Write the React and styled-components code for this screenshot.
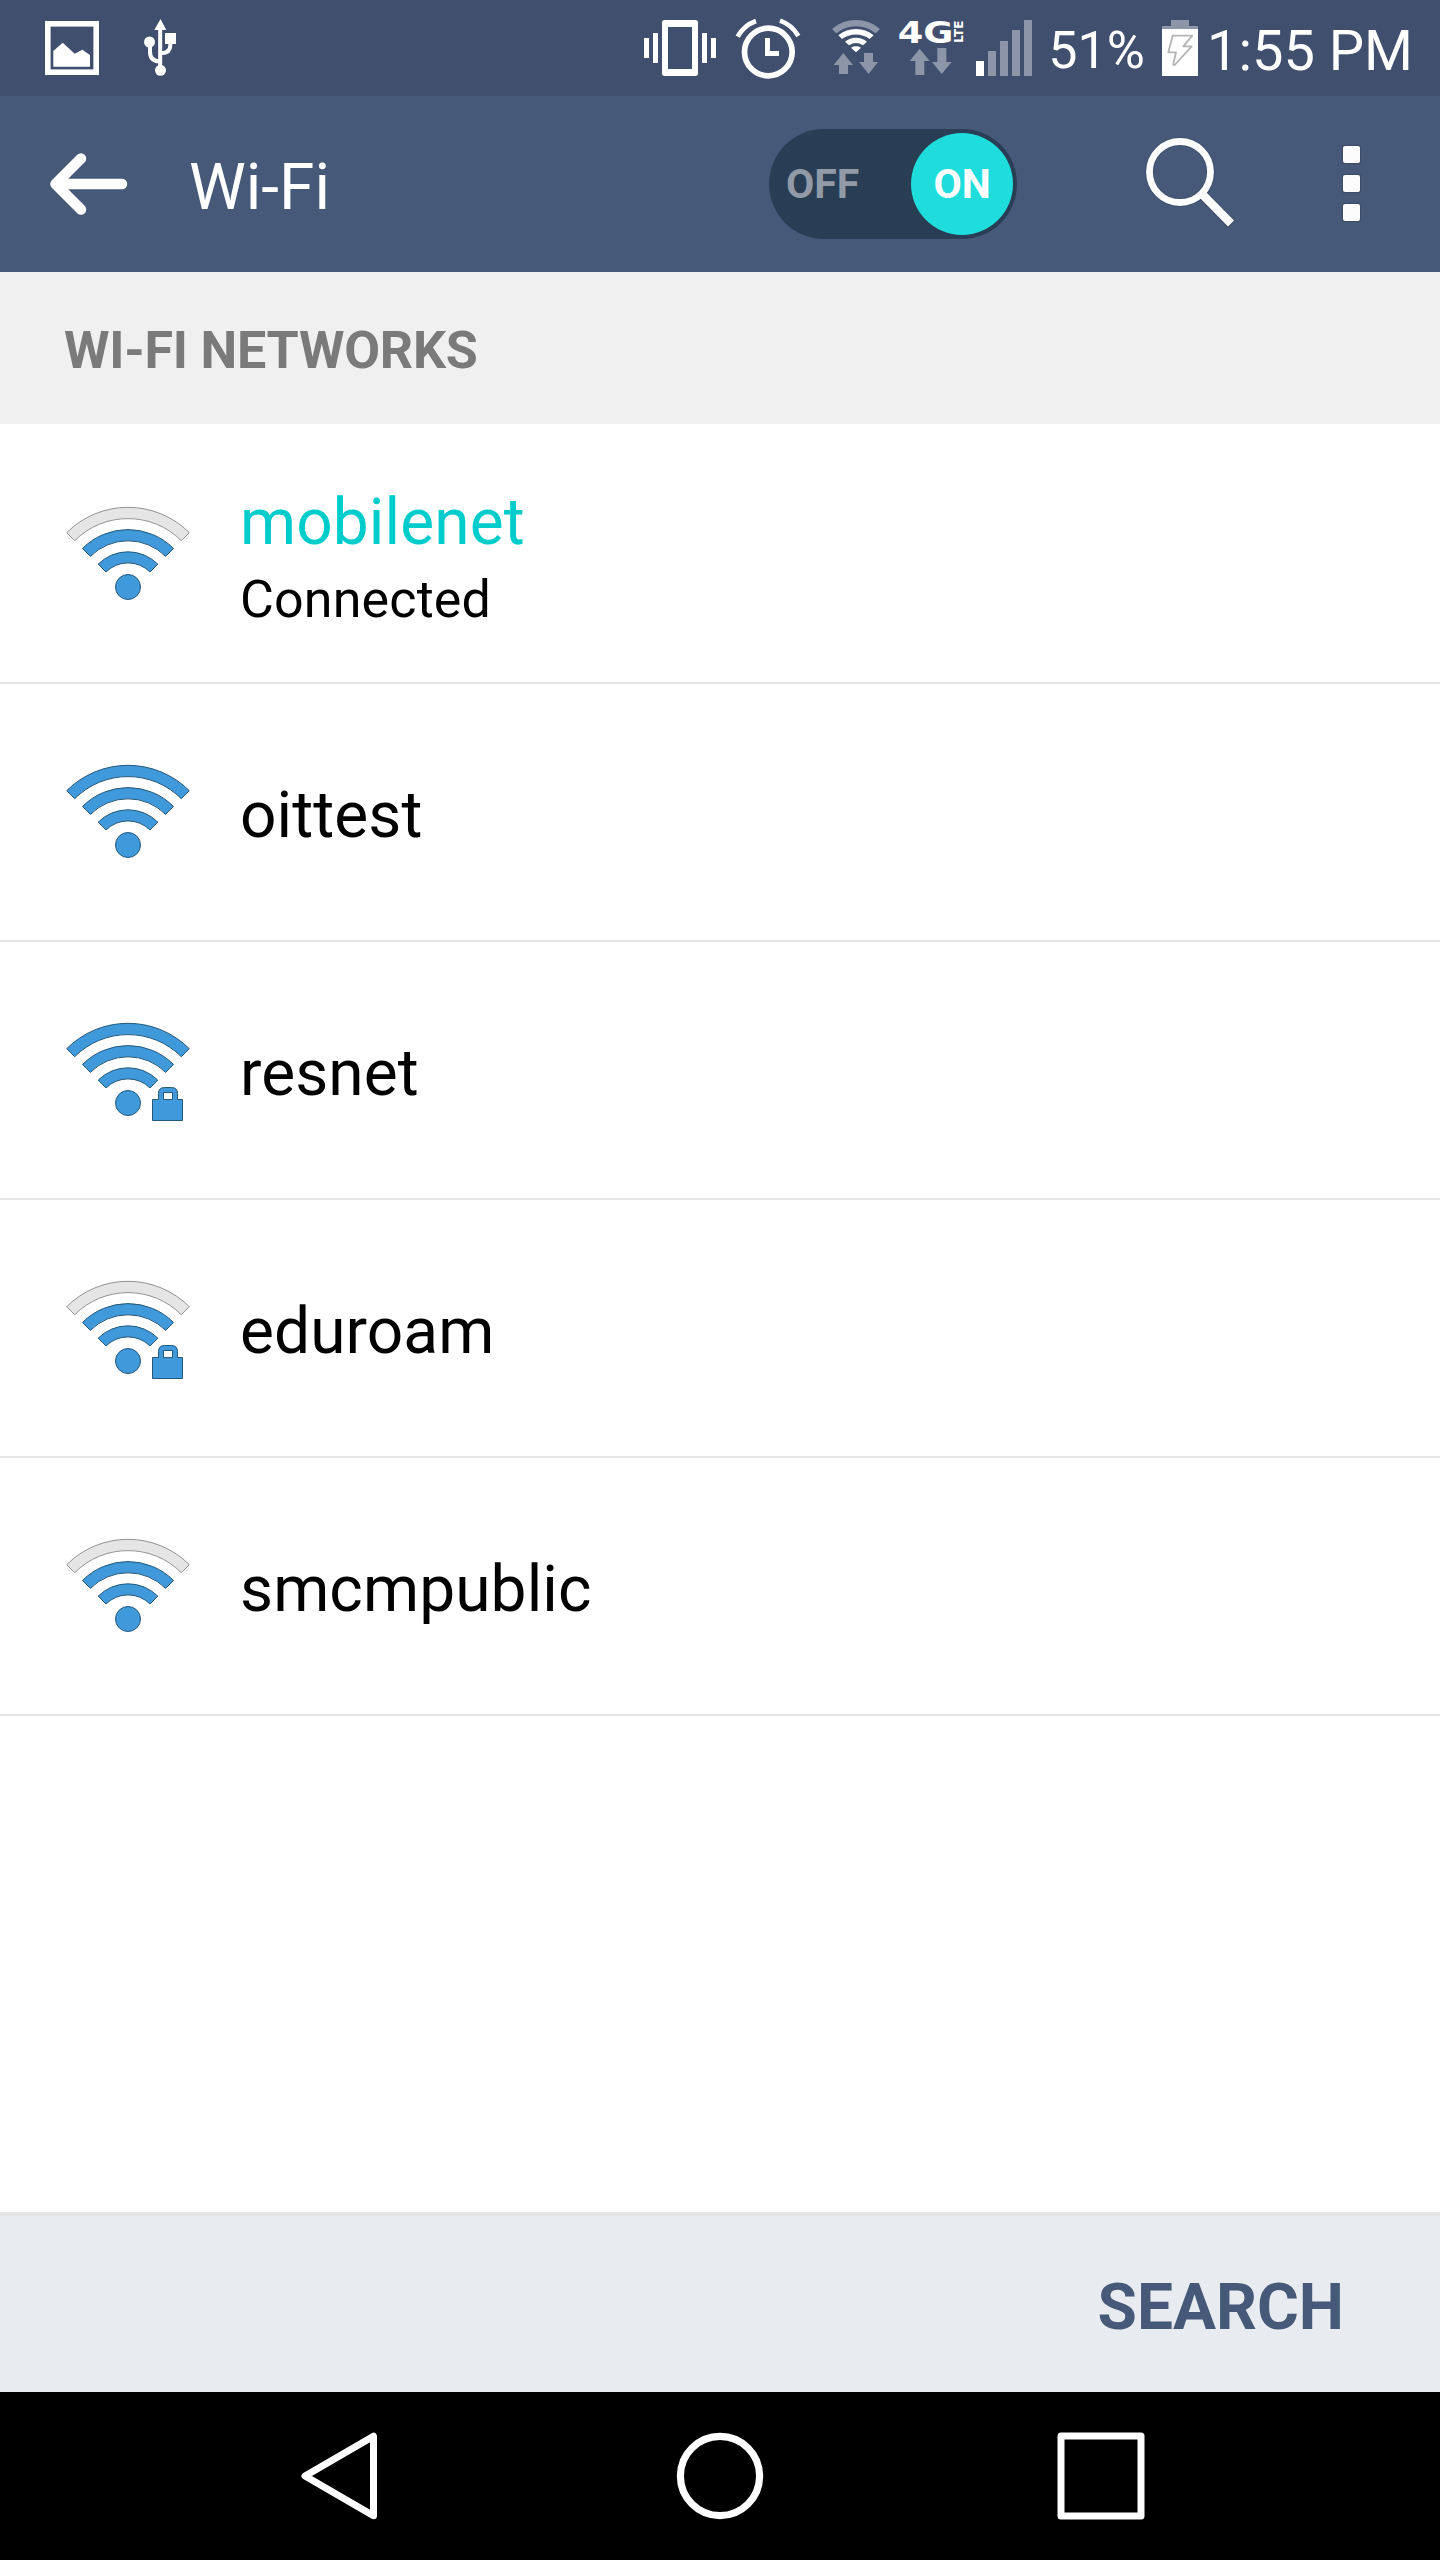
import React from 'react'
import styled, { createGlobalStyle } from 'styled-components'

const GlobalStyle = createGlobalStyle`
  * {
    box-sizing: border-box;
  }
  body {
    margin: 0;
    background: #fff;
    font-family: Roboto, 'Liberation Sans', sans-serif;
  }
  svg {
    display: block;
    flex: none;
    overflow: visible;
  }
`

const Screen = styled.div`
  display: flex;
  flex-direction: column;
  width: 1440px;
  height: 2560px;
  overflow: hidden;
  background: #fff;
`

const StatusBar = styled.div`
  display: flex;
  align-items: center;
  justify-content: space-between;
  flex: none;
  height: 96px;
  padding: 0 27px 0 45px;
  background: #414f6e;
  color: #fff;
`

const StatusGroup = styled.div`
  display: flex;
  align-items: center;
  gap: ${props => props.$gap || 0}px;
  margin-left: ${props => props.$left || 0}px;
`

const StatusText = styled.span`
  padding-top: 5px;
  margin-left: ${props => props.$left}px;
  margin-right: ${props => props.$right || 0}px;
  font-size: ${props => props.$size}px;
  line-height: 66px;
  white-space: nowrap;
`

const AppBar = styled.header`
  display: flex;
  align-items: center;
  flex: none;
  height: 176px;
  padding: 0 80px 0 50px;
  background: #465978;
  color: #fff;
`

const Title = styled.h1`
  flex: 1;
  margin: 0;
  padding: 8px 0 0 60px;
  font-size: 64px;
  font-weight: 400;
  line-height: 76px;
`

const Toggle = styled.div`
  display: flex;
  align-items: center;
  justify-content: space-between;
  width: 248px;
  height: 110px;
  margin-right: 129px;
  padding: 0 4px 0 17px;
  border-radius: 55px;
  background: #293e54;
  font-size: 41px;
  font-weight: 700;
`

const ToggleOff = styled.span`
  color: #929aa7;
`

const ToggleKnob = styled.span`
  display: flex;
  align-items: center;
  justify-content: center;
  width: 102px;
  height: 102px;
  border-radius: 50%;
  background: #1fdddc;
`

const MenuDots = styled.div`
  display: grid;
  gap: 12px;
  margin-left: 109px;
  padding-bottom: 1px;
`

const Dot = styled.span`
  width: 17px;
  height: 17px;
  border-radius: 2px;
  background: #fcfcfc;
  box-shadow: 0 0 1px 1px rgba(40, 50, 75, 0.35);
`

const SectionHeader = styled.h2`
  flex: none;
  height: 152px;
  margin: 0;
  padding: 5px 64px 0;
  background: #f0f0f0;
  color: #7a7a7a;
  font-size: 52px;
  font-weight: 700;
  letter-spacing: -0.22px;
  line-height: 148px;
`

const NetworkList = styled.ul`
  flex: 1;
  margin: 0;
  padding: 2px 0 0;
  list-style: none;
`

const NetworkRow = styled.li`
  display: flex;
  align-items: center;
  gap: 48px;
  height: 258px;
  padding: 0 64px;
  border-bottom: 2px solid #e5e5e5;
`

const NetworkText = styled.div`
  padding-top: 8px;
`

const NetworkName = styled.div`
  color: ${props => (props.$active ? '#00cccc' : '#000')};
  font-size: 64px;
  letter-spacing: 0.1px;
  line-height: 84px;
`

const NetworkStatus = styled.div`
  color: #000;
  font-size: 52px;
  letter-spacing: 0.15px;
  line-height: 70px;
`

const ActionBar = styled.div`
  display: flex;
  align-items: center;
  justify-content: flex-end;
  flex: none;
  height: 180px;
  padding: 8px 96px 0 0;
  border-top: 4px solid #e5e5e5;
  background: #e8ebef;
`

const ActionButton = styled.button`
  padding: 0;
  border: 0;
  background: none;
  color: #465978;
  font-family: inherit;
  font-size: 64px;
  font-weight: 700;
  line-height: 76px;
`

const NavBar = styled.nav`
  display: grid;
  grid-template-columns: repeat(3, 381px);
  align-items: center;
  justify-content: center;
  justify-items: center;
  flex: none;
  height: 168px;
  background: #000;
`

const DIM = '#8d95a8'

const PictureIcon = () => (
  <svg width="54" height="54" viewBox="0 0 54 54">
    <rect x="2.8" y="2.8" width="48.4" height="48.4" fill="none" stroke="#fff" strokeWidth="5.6" />
    <path d="M8.3 45.7V30L17.7 21.7L29.7 32.7L37.3 28.7L45 34V45.7Z" fill="#fff" />
  </svg>
)

const UsbIcon = () => (
  <svg width="33" height="58" viewBox="432 57 99 174">
    <path d="M481.500 57L499 90H463Z" fill="#fff" />
    <path
      d="M480.500 88V205M450 130V155Q450 183 478 184M511 128V135Q511 159 484 160"
      fill="none"
      stroke="#fff"
      strokeWidth="12"
    />
    <circle cx="448.500" cy="126" r="16.500" fill="#fff" />
    <circle cx="481.500" cy="211" r="16.500" fill="#fff" />
    <rect x="495" y="99" width="33" height="33" fill="#fff" />
  </svg>
)

const VibrateIcon = () => (
  <svg width="72" height="56" viewBox="72 60 216 168" fill="#fff">
    <path
      fillRule="evenodd"
      d="M134 60H226Q234 60 234 68V220Q234 228 226 228H134Q126 228 126 220V68Q126 60 134 60ZM144 81V207H216V81Z"
    />
    <path d="M72 114H87V174H72ZM99 99H114V189H99ZM246 99H261V189H246ZM273 114H288V174H273Z" />
  </svg>
)

const AlarmIcon = () => (
  <svg width="66" height="64" viewBox="345 48 198 192">
    <circle cx="445" cy="156" r="71.500" fill="none" stroke="#fff" strokeWidth="17" />
    <path d="M435 114H450V153H477V168H435Z" fill="#fff" />
    <path
      d="M353 110A102 102 0 0 1 408 63M535 108A102 102 0 0 0 480 62"
      fill="none"
      stroke="#fff"
      strokeWidth="14"
    />
  </svg>
)

const WifiDataIcon = () => (
  <svg width="50" height="56" viewBox="633 60 150 168">
    <path d="M636 87A110 110 0 0 1 780 87L767 100A92 92 0 0 0 649 100Z" fill={DIM} />
    <g fill="#fff">
      <path d="M655 106A83 83 0 0 1 761 106L749 117A70 70 0 0 0 666 117Z" />
      <path d="M675 125A52 52 0 0 1 741 125L729 136A38 38 0 0 0 687 136Z" />
      <path d="M693 143A30 30 0 0 1 723 143L708 157Z" />
    </g>
    <path
      d="M670 159L699 195H684V222H657V195H641ZM732 159H759V186H774L746 222L717 186H732Z"
      fill={DIM}
    />
  </svg>
)

const LteIcon = () => (
  <svg width="66" height="56" viewBox="836 60 198 168">
    <g fill="#fff" fontFamily="'DejaVu Sans', sans-serif" fontWeight="700">
      <text x="835" y="129" fontSize="90" textLength="167" lengthAdjust="spacingAndGlyphs">4G</text>
      <text
        transform="translate(1032 128) rotate(-90)"
        fontSize="38"
        textLength="66"
        lengthAdjust="spacingAndGlyphs"
      >
        LTE
      </text>
    </g>
    <path
      d="M901 146L931 183H915V225H888V183H871ZM954 144H981V186H997L967 222L938 186H954Z"
      fill={DIM}
    />
  </svg>
)

const SignalIcon = () => (
  <svg width="56" height="56" viewBox="0 0 56 56" fill={DIM}>
    <rect x="0" y="41" width="8" height="15" fill="#fff" />
    <rect x="12" y="31" width="8" height="25" />
    <rect x="24" y="21" width="8" height="35" />
    <rect x="36" y="10" width="8" height="46" />
    <rect x="48" y="0" width="8" height="56" />
  </svg>
)

const BatteryIcon = () => (
  <svg width="36" height="56" viewBox="426 60 108 168">
    <path d="M453 60H507V78H534V87H426V78H453Z" fill={DIM} />
    <rect x="426" y="87" width="108" height="141" fill="#fff" />
    <path
      d="M458 107H517L490 139H515L464 195Q459 196 460 191L468 157H445Z"
      fill="none"
      stroke="#b5b5b5"
      strokeWidth="5.500"
      strokeLinejoin="round"
    />
  </svg>
)

const BackArrowIcon = () => (
  <svg width="79" height="64" viewBox="0 0 79 64">
    <path
      d="M31 6.500L5.500 32L31 57.500M6 32H72"
      fill="none"
      stroke="#fff"
      strokeWidth="10.500"
      strokeLinecap="round"
      strokeLinejoin="round"
    />
  </svg>
)

const SearchIcon = () => (
  <svg width="88" height="92" viewBox="0 0 88 92">
    <g fill="none" stroke="#2f3d5b" strokeOpacity="0.4">
      <circle cx="34" cy="34" r="30.500" strokeWidth="8.500" />
      <path d="M56 56L85.500 86.500" strokeWidth="10.500" />
    </g>
    <g fill="none" stroke="#fcfcfc">
      <circle cx="34" cy="34" r="30.500" strokeWidth="6.800" />
      <path d="M55.500 55.500L85 85.500" strokeWidth="8.500" />
    </g>
  </svg>
)

// arcs share one centre and are cut off at 45 degrees
const arcBand = (outer, inner) => {
  const o = outer * Math.SQRT1_2
  const i = inner * Math.SQRT1_2
  return `M${64 - o} ${104 - o}A${outer} ${outer} 0 0 1 ${64 + o} ${104 - o}L${64 + i} ${104 - i}A${inner} ${inner} 0 0 0 ${64 - i} ${104 - i}Z`
}

const WifiIcon = ({ full, locked }) => (
  <svg
    width="128"
    height="128"
    viewBox="0 0 128 128"
    fill="#3f99db"
    stroke="#265878"
    strokeWidth="1"
    strokeLinejoin="round"
  >
    <path
      d={arcBand(86.7, 75.4)}
      fill={full ? undefined : '#e5e5e5'}
      stroke={full ? undefined : '#939393'}
    />
    <path d={arcBand(64.4, 53.2)} />
    <path d={arcBand(42.2, 31.1)} />
    <circle cx="64" cy="97" r="12.500" />
    {locked && (
      <path
        fillRule="evenodd"
        d="M88.500 93.500H94.500V87.500Q94.500 81.500 100.500 81.500H107.500Q113.500 81.500 113.500 87.500V93.500H118.500V114.500H88.500ZM99.500 86.500V93.500H108.500V86.500Z"
      />
    )}
  </svg>
)

const NavBackIcon = () => (
  <svg width="76" height="88" viewBox="0 0 76 88">
    <path d="M72.500 4.200V83.800L4 44Z" fill="none" stroke="#fff" strokeWidth="7" strokeLinejoin="round" />
  </svg>
)

const NavHomeIcon = () => (
  <svg width="88" height="88" viewBox="0 0 88 88">
    <circle cx="44" cy="44" r="39.600" fill="none" stroke="#fff" strokeWidth="7.200" />
  </svg>
)

const NavRecentIcon = () => (
  <svg width="88" height="88" viewBox="0 0 88 88">
    <rect x="4" y="4" width="80" height="80" fill="none" stroke="#fff" strokeWidth="7" strokeLinejoin="round" />
  </svg>
)

const networks = [
  { name: 'mobilenet', status: 'Connected', active: true },
  { name: 'oittest', full: true },
  { name: 'resnet', full: true, locked: true },
  { name: 'eduroam', locked: true },
  { name: 'smcmpublic' },
]

export default function App() {
  return (
    <Screen>
      <GlobalStyle />
      <StatusBar>
        <StatusGroup $gap={45}>
          <PictureIcon />
          <UsbIcon />
        </StatusGroup>
        <StatusGroup>
          <StatusGroup $gap={19}>
            <VibrateIcon />
            <AlarmIcon />
          </StatusGroup>
          <StatusGroup $left={30} $gap={17}>
            <WifiDataIcon />
            <LteIcon />
          </StatusGroup>
          <StatusGroup $left={12}>
            <SignalIcon />
            <StatusText $left={16} $right={17} $size={52}>51%</StatusText>
            <BatteryIcon />
            <StatusText $left={9} $size={56}>1:55 PM</StatusText>
          </StatusGroup>
        </StatusGroup>
      </StatusBar>
      <AppBar>
        <BackArrowIcon />
        <Title>Wi-Fi</Title>
        <Toggle>
          <ToggleOff>OFF</ToggleOff>
          <ToggleKnob>ON</ToggleKnob>
        </Toggle>
        <SearchIcon />
        <MenuDots>
          <Dot />
          <Dot />
          <Dot />
        </MenuDots>
      </AppBar>
      <SectionHeader>WI-FI NETWORKS</SectionHeader>
      <NetworkList>
        {networks.map(network => (
          <NetworkRow key={network.name}>
            <WifiIcon full={network.full} locked={network.locked} />
            <NetworkText>
              <NetworkName $active={network.active}>{network.name}</NetworkName>
              {network.status && <NetworkStatus>{network.status}</NetworkStatus>}
            </NetworkText>
          </NetworkRow>
        ))}
      </NetworkList>
      <ActionBar>
        <ActionButton>SEARCH</ActionButton>
      </ActionBar>
      <NavBar>
        <NavBackIcon />
        <NavHomeIcon />
        <NavRecentIcon />
      </NavBar>
    </Screen>
  )
}
